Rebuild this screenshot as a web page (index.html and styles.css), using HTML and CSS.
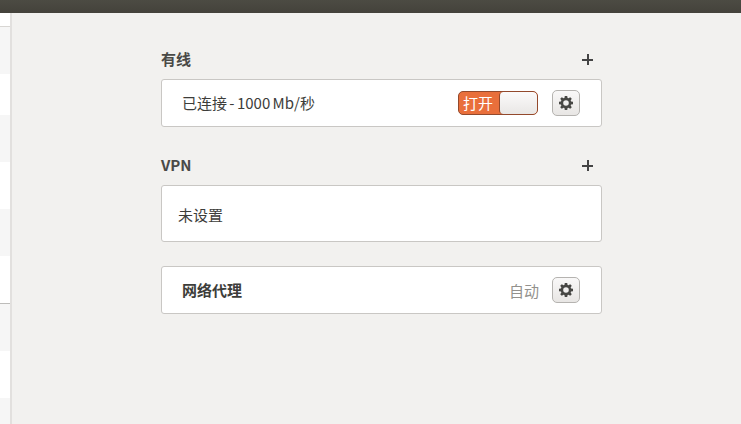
FILE: index.html
```html
<!DOCTYPE html>
<html lang="zh-CN">
<head>
    <meta charset="UTF-8">
    <title>网络</title>
    <link rel="stylesheet" href="styles.css">
</head>
<body>
    <!-- Title bar -->
    <div class="titlebar"></div>

    <div class="window">
        <!-- Sidebar list, only its right edge is visible -->
        <div class="sidebar">
            <div class="side-row side-first"></div>
            <div class="side-row side-alt"></div>
            <div class="side-row side-short"></div>
            <div class="side-row side-alt"></div>
            <div class="side-row"></div>
            <div class="side-row side-alt"></div>
            <div class="side-row side-end"></div>
            <div class="side-row side-alt"></div>
            <div class="side-row"></div>
            <div class="side-row side-alt"></div>
        </div>

        <div class="content">
            <div class="section-head">
                <h2>有线</h2>
                <span class="plus"></span>
            </div>
            <div class="card card-row">
                <span class="row-label row-status">已连接 - 1000 Mb/秒</span>
                <div class="switch">
                    <span class="switch-on">打开</span>
                    <span class="switch-knob"></span>
                </div>
                <button class="gear-btn">
                    <svg class="gear" viewBox="0 0 16 16"><path fill-rule="evenodd" d="M6.6 0h2.8l.4 2.2 1.100.5L12.800 1.400l1.800 1.800-1.300 1.900.5 1.100 2.200.4v2.800l-2.200.4-.5 1.100 1.300 1.900-1.800 1.800-1.900-1.300-1.100.5-.4 2.200H6.600l-.4-2.200-1.100-.5-1.900 1.300-1.800-1.800 1.300-1.900-.5-1.100L0 9.400V6.600l2.200-.4.5-1.100-1.300-1.900 1.800-1.800 1.900 1.300 1.100-.5zM8 4.800a3.200 3.200 0 1 0 0 6.400 3.200 3.200 0 0 0 0-6.400z"/></svg>
                </button>
            </div>

            <div class="section-head section-vpn">
                <h2>VPN</h2>
                <span class="plus"></span>
            </div>
            <div class="card card-empty">未设置</div>

            <div class="card card-row card-proxy">
                <span class="row-label row-bold">网络代理</span>
                <span class="row-value">自动</span>
                <button class="gear-btn">
                    <svg class="gear" viewBox="0 0 16 16"><path fill-rule="evenodd" d="M6.6 0h2.8l.4 2.2 1.100.5L12.800 1.400l1.800 1.800-1.300 1.900.5 1.100 2.200.4v2.800l-2.200.4-.5 1.100 1.300 1.900-1.800 1.800-1.900-1.300-1.100.5-.4 2.200H6.600l-.4-2.200-1.100-.5-1.900 1.300-1.800-1.800 1.300-1.900-.5-1.100L0 9.400V6.600l2.200-.4.5-1.100-1.300-1.900 1.800-1.800 1.900 1.300 1.100-.5zM8 4.800a3.200 3.200 0 1 0 0 6.400 3.200 3.200 0 0 0 0-6.400z"/></svg>
                </button>
            </div>
        </div>
    </div>
</body>
</html>
```

FILE: styles.css
```css
* {
    margin: 0;
    padding: 0;
    box-sizing: border-box;
}

html, body {
    height: 100%;
    overflow: hidden;
}

body {
    font-family: "Noto Sans CJK SC", "Noto Sans", sans-serif;
    font-size: 15px;
    color: #3d3d3a;
    background: #f2f1ef;
    display: flex;
    flex-direction: column;
}

.titlebar {
    height: 13px;
    flex: none;
    background: linear-gradient(to bottom, #4c4b43, #44423b);
}

.window {
    flex: 1;
    display: flex;
    min-height: 0;
}

/* Sidebar */
.sidebar {
    width: 12px;
    flex: none;
    overflow: hidden;
    border-right: 2px solid #e2e0de;
    display: flex;
    flex-direction: column;
}

.side-row {
    height: 47px;
    flex: none;
    background: #fff;
}

.side-alt {
    background: #f6f6f6;
}

.side-first {
    height: 14px;
    border-bottom: 1px solid #d8d6d3;
}

.side-short {
    height: 41px;
}

.side-end {
    height: 48px;
    border-bottom: 1px solid #bdbcba;
}

/* Main panel */
.content {
    width: 441px;
    margin-left: 149px;
    padding-top: 34px;
}

.section-head {
    height: 32px;
    display: flex;
    justify-content: space-between;
    align-items: flex-start;
    padding-right: 9px;
}

.section-vpn {
    margin-top: 26px;
}

h2 {
    font-size: 15px;
    font-weight: 700;
    line-height: 23px;
    color: #4a4a47;
}

.plus {
    width: 11px;
    height: 11px;
    margin-top: 7px;
    background:
        linear-gradient(#444, #444) center / 11px 2px no-repeat,
        linear-gradient(#444, #444) center / 2px 11px no-repeat;
}

.card {
    background: #fff;
    border: 1px solid #c9c7c4;
    border-radius: 3px;
}

.card-row {
    height: 48px;
    display: flex;
    align-items: center;
    padding: 0 21px 0 20px;
}

.card-empty {
    height: 57px;
    line-height: 57px;
    padding-left: 16px;
}

.card-proxy {
    margin-top: 24px;
}

.row-label {
    flex: 1;
    padding-bottom: 2px;
}

.row-status {
    word-spacing: -1px;
}

.row-bold {
    font-weight: 700;
}

.row-value {
    color: #93918d;
    margin-right: 13px;
}

/* Switch */
.switch {
    width: 80px;
    height: 24px;
    display: flex;
    margin-right: 14px;
    border: 1px solid #93492c;
    border-radius: 5px;
    background: #e96f3b;
    overflow: hidden;
}

.switch-on {
    width: 40px;
    color: #fff;
    font-size: 15px;
    line-height: 22px;
    padding-left: 4px;
}

.switch-knob {
    flex: 1;
    border-left: 1px solid #93492c;
    border-radius: 4px;
    background: linear-gradient(to bottom, #fbfafa, #e9e7e5);
}

.gear-btn {
    width: 28px;
    height: 26px;
    display: flex;
    align-items: center;
    justify-content: center;
    border: 1px solid #b5b3b0;
    border-radius: 5px;
    background: linear-gradient(to bottom, #f9f8f8, #e8e6e4);
}

.gear {
    width: 14px;
    height: 14px;
    fill: #474744;
}
```
